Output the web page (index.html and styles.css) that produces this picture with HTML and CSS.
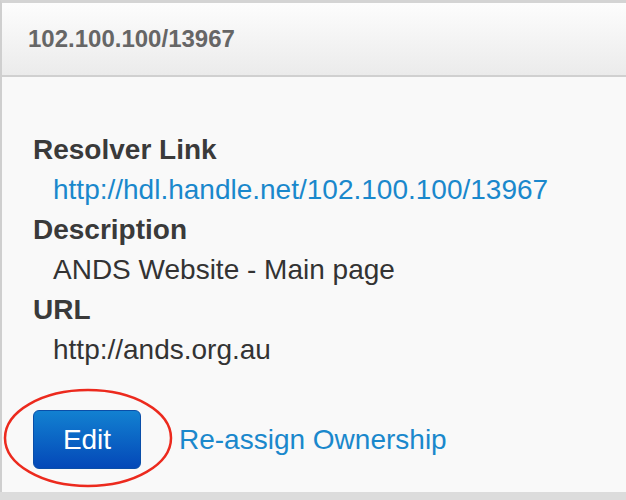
FILE: index.html
```html
<!DOCTYPE html>
<html>
<head>
<meta charset="utf-8">
<link rel="stylesheet" href="styles.css">
</head>
<body>
<div class="page">
  <div class="panel">
    <div class="panel-head">102.100.100/13967</div>
    <div class="panel-body">
      <dl class="details">
        <dt>Resolver Link</dt>
        <dd><a href="#">http://hdl.handle.net/102.100.100/13967</a></dd>
        <dt>Description</dt>
        <dd>ANDS Website - Main page</dd>
        <dt>URL</dt>
        <dd>http://ands.org.au</dd>
      </dl>
      <div class="actions">
        <span class="edit-wrap">
          <a class="btn" href="#">Edit</a>
          <svg class="ring" width="172" height="102" viewBox="0 0 172 102"><ellipse cx="86" cy="51" rx="83" ry="48" fill="none" stroke="#ec2a1e" stroke-width="2.5"/></svg>
        </span>
        <a class="link" href="#">Re-assign Ownership</a>
      </div>
    </div>
  </div>
</div>
</body>
</html>
```

FILE: styles.css
```css
html, body {
  margin: 0;
  padding: 0;
}
body {
  background: #dcdcdc;
  font-family: "Liberation Sans", Arial, sans-serif;
  width: 626px;
  height: 500px;
  overflow: hidden;
}
.panel {
  width: 640px;
  height: 492px;
  border-top: 3px solid #d4d4d4;
  border-left: 2px solid #cfcfcf;
  background: #f9f9f9;
  box-sizing: border-box;
}
.panel-head {
  height: 74px;
  box-sizing: border-box;
  background: linear-gradient(#fdfdfd, #ebebeb);
  border-bottom: 2px solid #d0d0d0;
  color: #666;
  font-weight: bold;
  font-size: 24px;
  line-height: 72px;
  padding-left: 26px;
}
.panel-body {
  padding: 0 0 0 31px;
}
.details {
  margin: 0;
  padding-top: 53px;
  font-size: 28px;
  line-height: 40px;
  color: #333;
}
.details dt {
  font-weight: bold;
  color: #3a3a3a;
}
.details dd {
  margin-left: 20px;
  color: #333;
}
.details a {
  color: #1a88cc;
  text-decoration: none;
}
.actions {
  display: flex;
  align-items: center;
  margin-top: 40px;
}
.edit-wrap {
  position: relative;
  display: inline-block;
}
.btn {
  display: block;
  width: 108px;
  height: 59px;
  box-sizing: border-box;
  border-radius: 6px;
  background: linear-gradient(#1281d1, #0448b8);
  border: 1px solid #0a4ea8;
  color: #fff;
  font-size: 28px;
  line-height: 57px;
  text-align: center;
  text-decoration: none;
}
.ring {
  position: absolute;
  left: -31px;
  top: -23px;
  pointer-events: none;
}
.link {
  margin-left: 38px;
  color: #1a88cc;
  font-size: 28px;
  text-decoration: none;
}
```
